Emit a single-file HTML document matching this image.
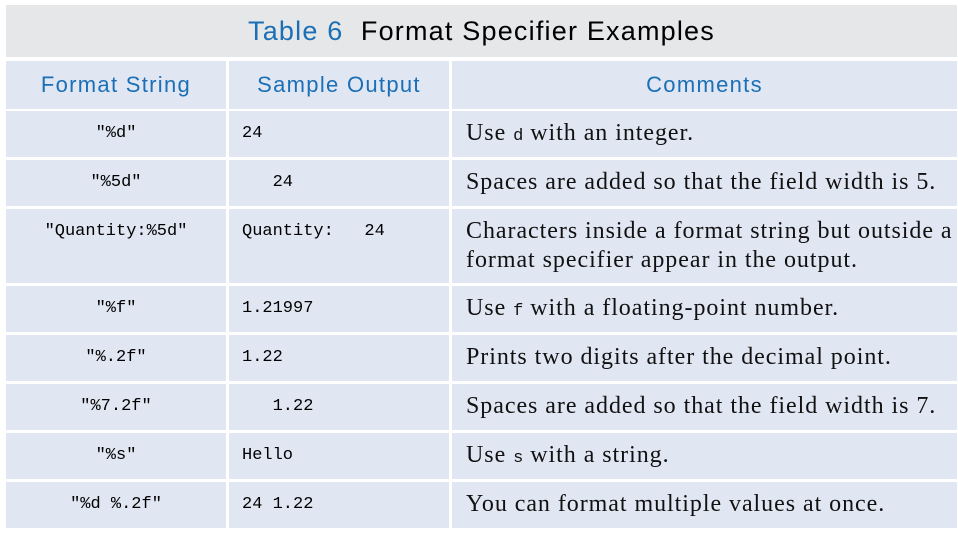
<!DOCTYPE html>
<html><head><meta charset="utf-8"><style>
body{margin:0;width:958px;height:533px;background:#fff;position:relative;overflow:hidden}
div{position:absolute;box-sizing:border-box}
.t{left:6px;top:5px;width:951px;height:52px;background:#e6e7e9;text-align:center;font:27px/52px "Liberation Sans",sans-serif;color:#000;letter-spacing:1.2px}
.t span{color:#1a6fb5}
.c{background:#e1e6f3}
.h{font:22px/48px "Liberation Sans",sans-serif;color:#1a6fb5;text-align:center;letter-spacing:1.3px}
.m{font:17px "Liberation Mono",monospace;color:#000;white-space:pre;padding-top:13px}
.a{text-align:center}
.b{padding-left:13px}
.s{font:24px/29px "Liberation Serif",serif;color:#111;padding:8px 0 0 14px;letter-spacing:0.95px;white-space:nowrap}
.s code{font:17px "Liberation Mono",monospace;letter-spacing:0}
</style></head><body>
<div class="t"><span>Table 6</span>&nbsp; Format Specifier Examples</div>
<div class="c h" style="left:6px;top:61px;width:220px;height:48px">Format String</div>
<div class="c h" style="left:229px;top:61px;width:220px;height:48px">Sample Output</div>
<div class="c h" style="left:452px;top:61px;width:505px;height:48px">Comments</div>

<div class="c m a" style="left:6px;top:111px;width:220px;height:46px">"%d"</div>
<div class="c m b" style="left:229px;top:111px;width:220px;height:46px">24</div>
<div class="c s" style="left:452px;top:111px;width:505px;height:46px">Use <code>d</code> with an integer.</div>

<div class="c m a" style="left:6px;top:160px;width:220px;height:46px">"%5d"</div>
<div class="c m b" style="left:229px;top:160px;width:220px;height:46px">   24</div>
<div class="c s" style="left:452px;top:160px;width:505px;height:46px">Spaces are added so that the field width is 5.</div>

<div class="c m a" style="left:6px;top:209px;width:220px;height:74px">"Quantity:%5d"</div>
<div class="c m b" style="left:229px;top:209px;width:220px;height:74px">Quantity:   24</div>
<div class="c s" style="left:452px;top:209px;width:505px;height:74px">Characters inside a format string but outside a<br>format specifier appear in the output.</div>

<div class="c m a" style="left:6px;top:286px;width:220px;height:46px">"%f"</div>
<div class="c m b" style="left:229px;top:286px;width:220px;height:46px">1.21997</div>
<div class="c s" style="left:452px;top:286px;width:505px;height:46px">Use <code>f</code> with a floating-point number.</div>

<div class="c m a" style="left:6px;top:335px;width:220px;height:46px">"%.2f"</div>
<div class="c m b" style="left:229px;top:335px;width:220px;height:46px">1.22</div>
<div class="c s" style="left:452px;top:335px;width:505px;height:46px">Prints two digits after the decimal point.</div>

<div class="c m a" style="left:6px;top:384px;width:220px;height:46px">"%7.2f"</div>
<div class="c m b" style="left:229px;top:384px;width:220px;height:46px">   1.22</div>
<div class="c s" style="left:452px;top:384px;width:505px;height:46px">Spaces are added so that the field width is 7.</div>

<div class="c m a" style="left:6px;top:433px;width:220px;height:46px">"%s"</div>
<div class="c m b" style="left:229px;top:433px;width:220px;height:46px">Hello</div>
<div class="c s" style="left:452px;top:433px;width:505px;height:46px">Use <code>s</code> with a string.</div>

<div class="c m a" style="left:6px;top:482px;width:220px;height:46px">"%d %.2f"</div>
<div class="c m b" style="left:229px;top:482px;width:220px;height:46px">24 1.22</div>
<div class="c s" style="left:452px;top:482px;width:505px;height:46px">You can format multiple values at once.</div>
</body></html>
